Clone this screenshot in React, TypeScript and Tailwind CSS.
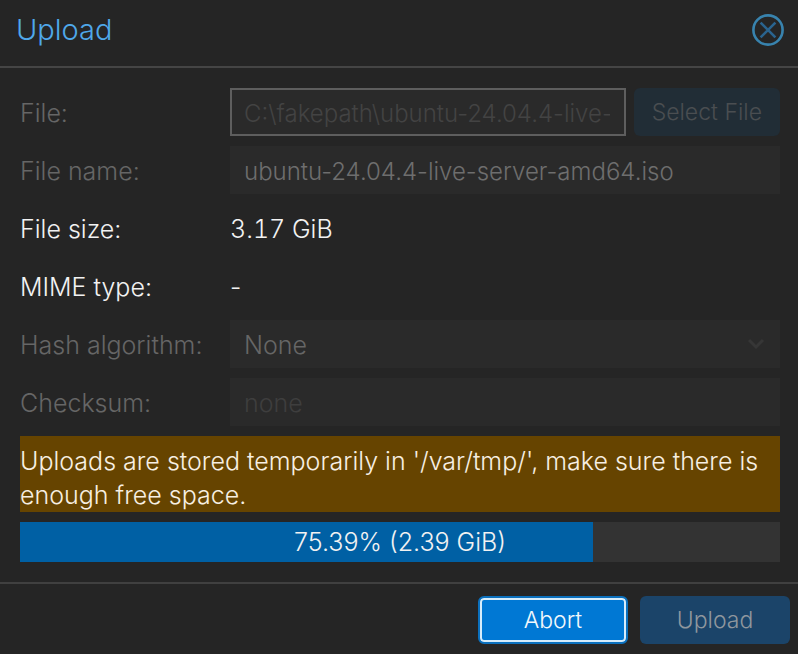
import React, { useState } from "react";

interface FieldRowProps {
  label: string;
  htmlFor?: string;
  disabled?: boolean;
  children: React.ReactNode;
}

const FieldRow: React.FC<FieldRowProps> = ({ label, htmlFor, disabled, children }) => {
  const labelClass = `w-[210px] shrink-0 pt-0.5 ${disabled ? "text-[#666666]" : "text-[#f2f2f2]"}`;

  return (
    <div className="flex h-12 items-center">
      {htmlFor ? (
        <label htmlFor={htmlFor} className={labelClass}>{label}</label>
      ) : (
        <span className={labelClass}>{label}</span>
      )}
      {children}
    </div>
  );
};

const App: React.FC = () => {
  const [fileName, setFileName] = useState<string>("ubuntu-24.04.4-live-server-amd64.iso");
  const [hash, setHash] = useState<string>("None");
  const [checksum, setChecksum] = useState<string>("");
  const progress = 75.39;

  return (
    <div className="flex min-h-screen flex-col bg-[#252525] font-['Inter','Liberation_Sans',sans-serif] text-[25px] leading-[34px] font-light">
      {/* Title bar */}
      <header className="flex items-center justify-between border-b-2 border-[#454545] pt-[9px] pr-[14px] pb-[15px] pl-4">
        <h1 className="text-[29px] leading-[42px] text-[#4fa8ea]">Upload</h1>
        <button type="button" aria-label="Close">
          <svg width="32" height="32" viewBox="0 0 32 32" fill="none" stroke="#3883ae">
            <circle cx="16" cy="16" r="14.6" strokeWidth="2.6" />
            <path d="M8.6 8.6l14.8 14.8M23.4 8.6L8.6 23.4" stroke="#2a648f" strokeWidth="2.6" />
          </svg>
        </button>
      </header>

      <main className="flex flex-1 flex-col gap-[10px] py-5 pr-[18px] pl-5">
        <FieldRow label="File:" htmlFor="file" disabled>
          <input
            id="file"
            type="text"
            readOnly
            disabled
            value="C:\fakepath\ubuntu-24.04.4-live-server-amd64.iso"
            className="h-12 min-w-0 flex-1 border-2 border-[#5e5e5e] bg-[#2a2a2a] pr-[14px] pl-3 pt-0.5 text-[24px] text-[#434343]"
          />
          <button
            type="button"
            disabled
            className="ml-2 h-12 rounded-md bg-[#212d36] px-[18px] text-[23px] text-[#4a4e51]"
          >
            Select File
          </button>
        </FieldRow>

        <FieldRow label="File name:" htmlFor="name" disabled>
          <input
            id="name"
            type="text"
            disabled
            value={fileName}
            onChange={(e) => setFileName(e.target.value)}
            className="h-12 min-w-0 flex-1 bg-[#2a2a2a] px-[14px] pt-0.5 text-[24px] text-[#6e6e6e]"
          />
        </FieldRow>

        <FieldRow label="File size:">
          <span className="pt-0.5 text-[#f2f2f2] tabular-nums">3.17 GiB</span>
        </FieldRow>

        <FieldRow label="MIME type:">
          <span className="pt-0.5 text-[#f2f2f2]">-</span>
        </FieldRow>

        <FieldRow label="Hash algorithm:" htmlFor="hash" disabled>
          <div className="relative flex-1">
            <select
              id="hash"
              disabled
              value={hash}
              onChange={(e) => setHash(e.target.value)}
              className="block h-12 w-full appearance-none bg-[#2a2a2a] px-[14px] pt-0.5 text-[#666666] opacity-100"
            >
              <option>None</option>
            </select>
            <svg
              className="pointer-events-none absolute top-4 right-4"
              width="16"
              height="16"
              viewBox="0 0 16 16"
              fill="none"
              stroke="#363636"
              strokeWidth="3"
            >
              <path d="M1 4l7 7 7-7" />
            </svg>
          </div>
        </FieldRow>

        <FieldRow label="Checksum:" htmlFor="checksum" disabled>
          <input
            id="checksum"
            type="text"
            disabled
            placeholder="none"
            value={checksum}
            onChange={(e) => setChecksum(e.target.value)}
            className="h-12 min-w-0 flex-1 bg-[#2a2a2a] px-[14px] pt-0.5 placeholder:text-[#3e3e3e]"
          />
        </FieldRow>

        <p className="bg-[#664400] pt-2 text-[#f7efe2]">
          Uploads are stored temporarily in '/var/tmp/', make sure there is enough free space.
        </p>

        {/* Progress */}
        <div
          role="progressbar"
          aria-label="Upload progress"
          aria-valuenow={progress}
          className="relative h-10 bg-[#333333]"
        >
          <div className="h-full bg-[#0060a4]" style={{ width: `${progress}%` }} />
          <span className="absolute inset-0 flex items-center justify-center text-[#f2f2f2]">
            {progress}% (2.39 GiB)
          </span>
        </div>
      </main>

      <footer className="flex justify-end gap-3 border-t-2 border-[#404040] pt-3 pr-2 pb-[10px] text-[23px]">
        <button
          type="button"
          className="h-12 w-[150px] rounded-md border-2 border-[#0b70bd] bg-[#0078d4] text-[#f2f8fc] inset-ring-2 inset-ring-[#d6ecfb]"
        >
          Abort
        </button>
        <button
          type="button"
          disabled
          className="h-12 w-[150px] rounded-md bg-[#1b4469] text-[#8f979e]"
        >
          Upload
        </button>
      </footer>
    </div>
  );
};

export default App;
